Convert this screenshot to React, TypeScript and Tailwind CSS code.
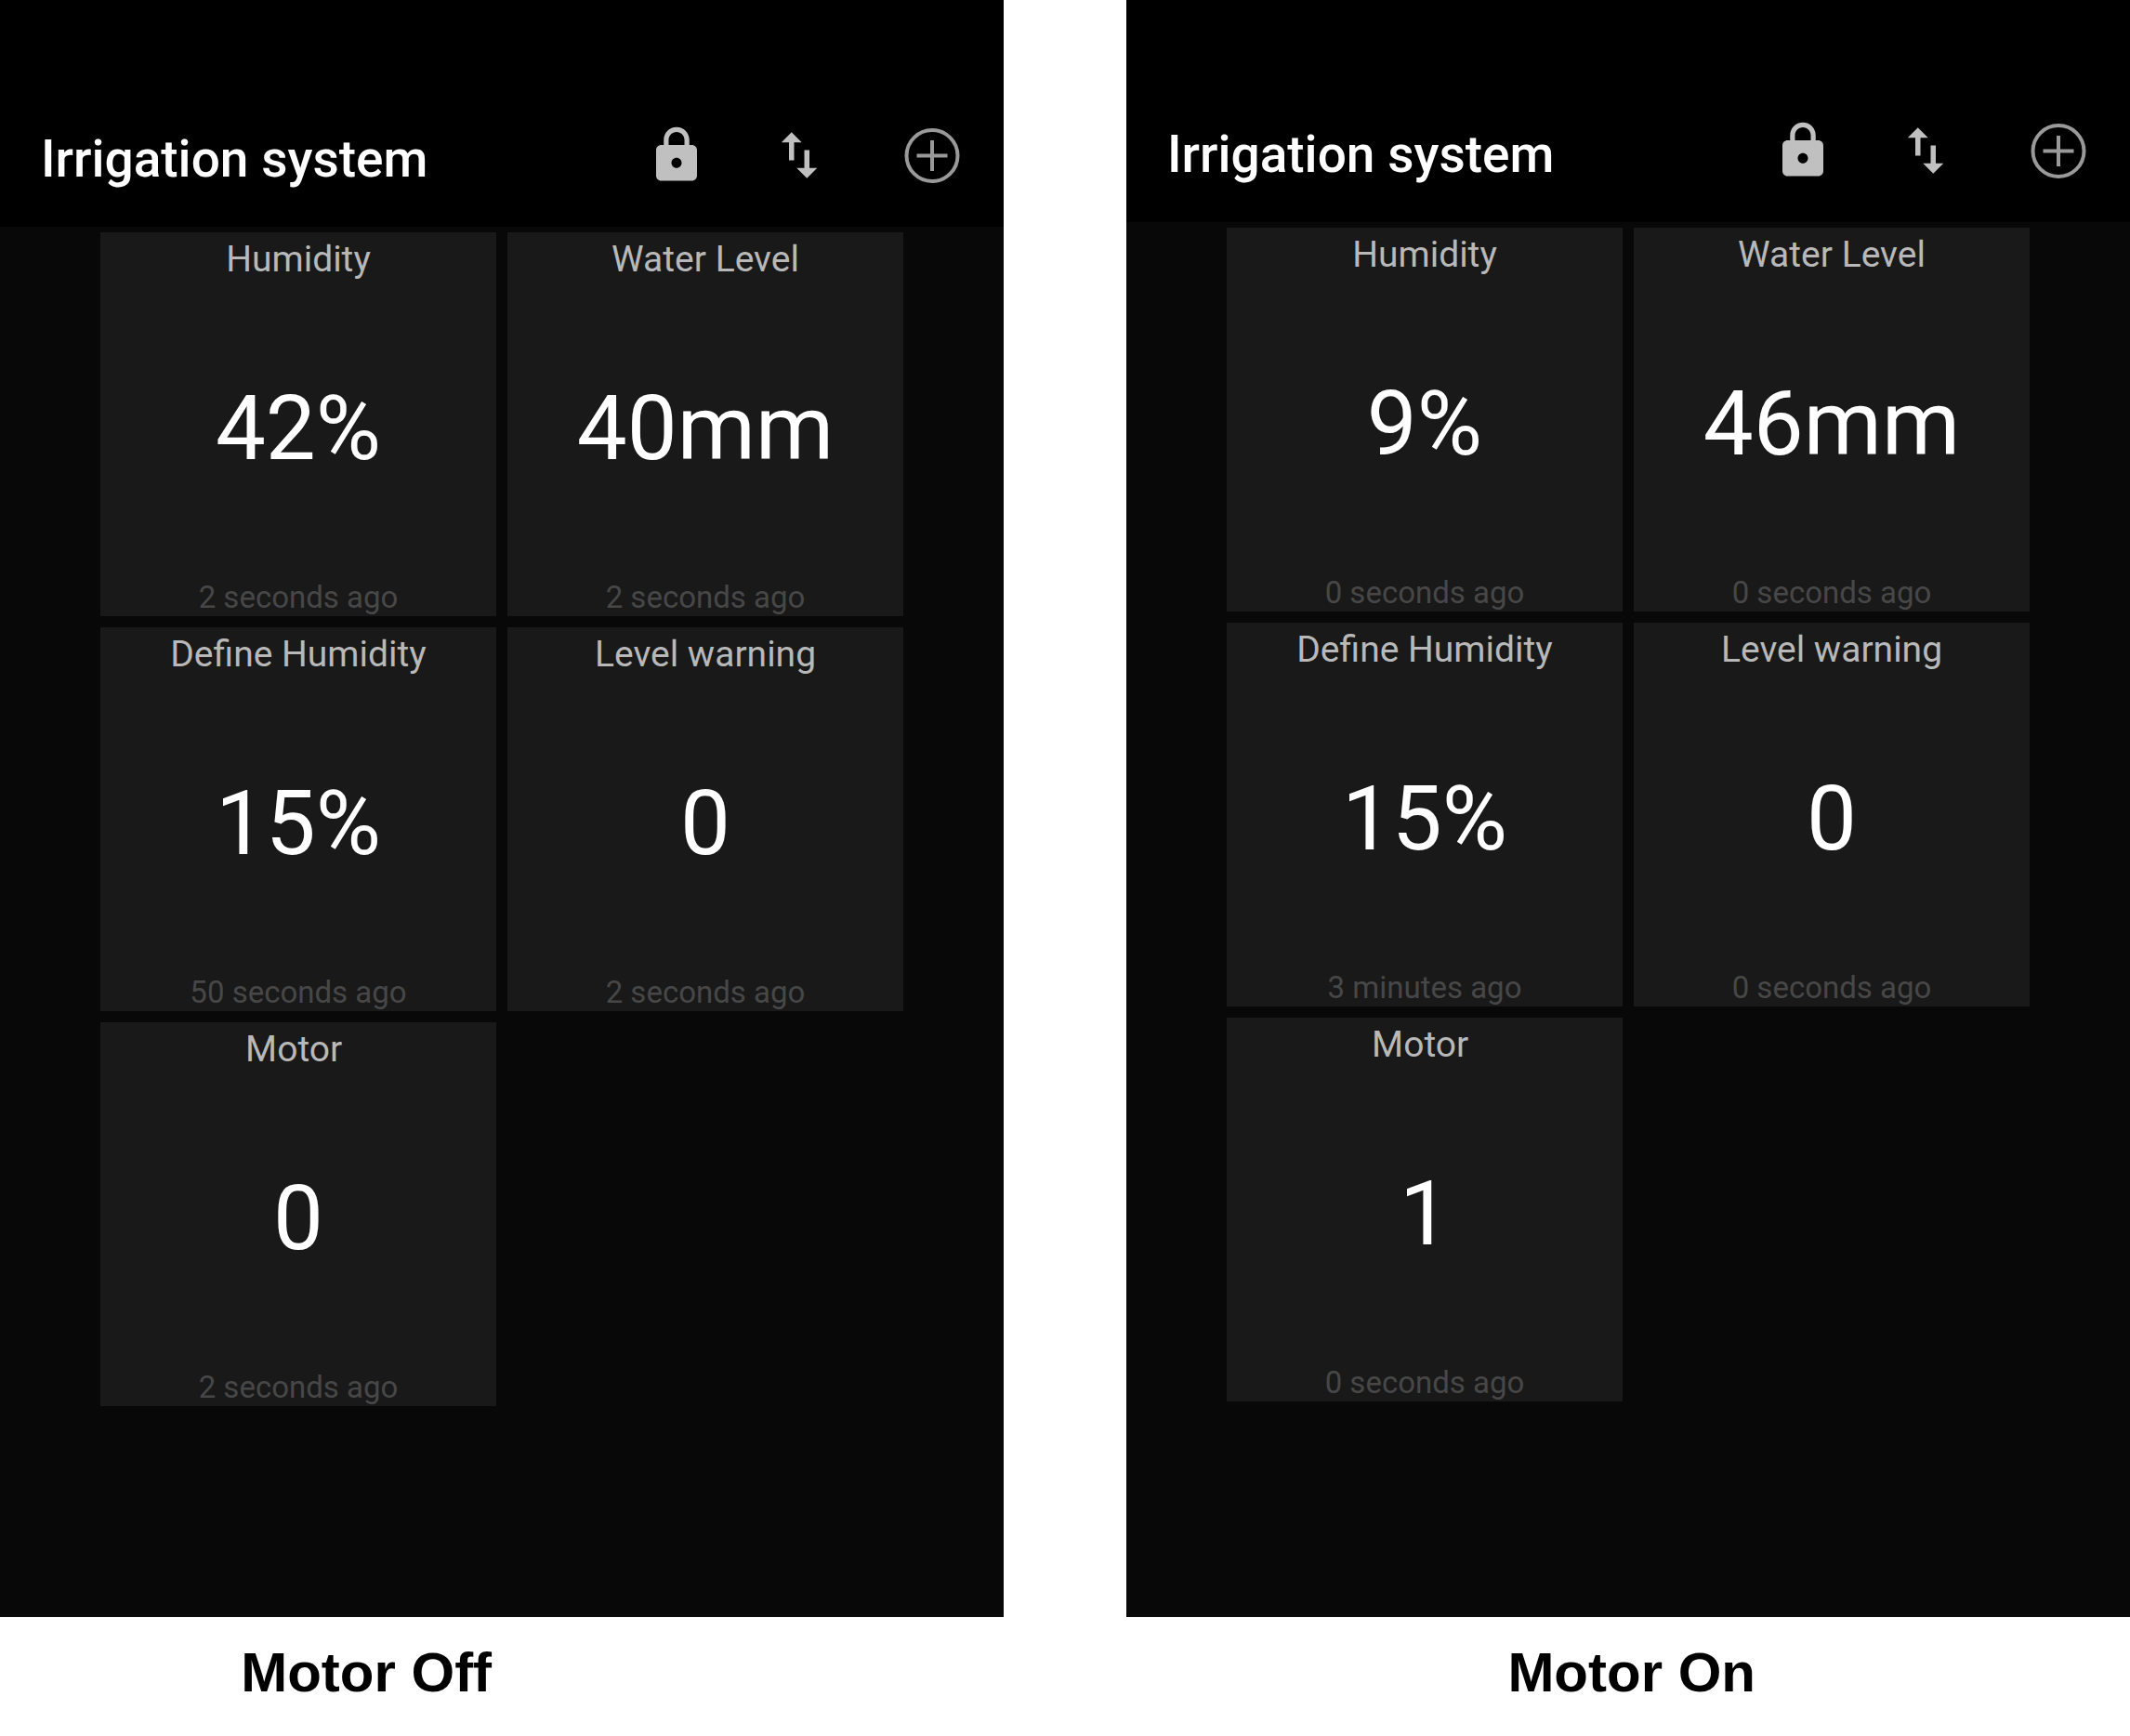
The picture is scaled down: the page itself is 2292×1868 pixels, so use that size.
type Tile = { label: string; value: string; updated: string };

const motorOff: Tile[] = [
  { label: "Humidity", value: "42%", updated: "2 seconds ago" },
  { label: "Water Level", value: "40mm", updated: "2 seconds ago" },
  { label: "Define Humidity", value: "15%", updated: "50 seconds ago" },
  { label: "Level warning", value: "0", updated: "2 seconds ago" },
  { label: "Motor ", value: "0", updated: "2 seconds ago" },
];

const motorOn: Tile[] = [
  { label: "Humidity", value: "9%", updated: "0 seconds ago" },
  { label: "Water Level", value: "46mm", updated: "0 seconds ago" },
  { label: "Define Humidity", value: "15%", updated: "3 minutes ago" },
  { label: "Level warning", value: "0", updated: "0 seconds ago" },
  { label: "Motor ", value: "1", updated: "0 seconds ago" },
];

function LockIcon() {
  return (
    <svg viewBox="0 0 24 24" className="size-full" fill="currentColor" aria-hidden="true">
      <path d="M18 8h-1V6c0-2.76-2.24-5-5-5S7 3.24 7 6v2H6c-1.1 0-2 .9-2 2v10c0 1.1.9 2 2 2h12c1.1 0 2-.9 2-2V10c0-1.1-.9-2-2-2zm-6 9c-1.1 0-2-.9-2-2s.9-2 2-2 2 .9 2 2-.9 2-2 2zm3.1-9H8.9V6c0-1.71 1.39-3.1 3.1-3.1 1.71 0 3.1 1.39 3.1 3.1v2z" />
    </svg>
  );
}

function SwapIcon() {
  return (
    <svg viewBox="0 0 24 24" className="size-full" fill="currentColor" aria-hidden="true">
      <path d="M16 17.01V10h-2v7.01h-3L15 21l4-3.99h-3zM9 3L5 6.99h3V14h2V6.99h3L9 3z" />
    </svg>
  );
}

function AddIcon() {
  return (
    <svg viewBox="0 0 66 66" className="size-full" fill="none" stroke="currentColor" strokeWidth="4" aria-hidden="true">
      <circle cx="33" cy="33.5" r="27.5" />
      <path d="M33 17v33M16.500 33.500h33" />
    </svg>
  );
}

function Panel({ tiles, topClass }: { tiles: Tile[]; topClass: string }) {
  return (
    <section className="flex-1 bg-[#080808] font-[Roboto,sans-serif]">
      <header className={`flex items-start justify-between bg-black px-11 pb-10 ${topClass}`}>
        <h1 className="pt-1 text-[55px] leading-[66px] font-medium whitespace-nowrap text-white">
          Irrigation system
        </h1>
        <div className="flex gap-[77px] text-[#c0c0c0]">
          <div className="flex gap-[66px]">
            <button type="button" aria-label="Lock" className="size-[66px]">
              <LockIcon />
            </button>
            <button type="button" aria-label="Reorder" className="size-[66px]">
              <SwapIcon />
            </button>
          </div>
          <button type="button" aria-label="Add tile" className="size-[66px] text-[#999999]">
            <AddIcon />
          </button>
        </div>
      </header>
      <div className="grid grid-cols-2 gap-3 px-[10%] pt-1.5">
        {tiles.map((tile) => (
          <article key={tile.label} className="flex h-[413px] flex-col bg-[#191919] text-center">
            <h2 className="pt-[5px] text-[39px] leading-12 whitespace-pre text-[#b8b8b8]">{tile.label}</h2>
            <p className="flex flex-1 items-center justify-center text-8xl text-white">{tile.value}</p>
            <p className="pt-1 text-[33px] leading-10 text-[#474747]">{tile.updated}</p>
          </article>
        ))}
      </div>
    </section>
  );
}

export default function App() {
  return (
    <main className="flex min-h-screen gap-[132px] bg-white">
      <figure className="flex flex-1 flex-col">
        <Panel tiles={motorOff} topClass="pt-[134px]" />
        <figcaption className="pt-6 pb-8 pl-[24%] font-['Liberation_Sans',sans-serif] text-[60px] leading-[72px] font-bold text-black">
          Motor Off
        </figcaption>
      </figure>
      <figure className="flex flex-1 flex-col">
        <Panel tiles={motorOn} topClass="pt-[129px]" />
        <figcaption className="pt-6 pb-8 pl-[38%] font-['Liberation_Sans',sans-serif] text-[60px] leading-[72px] font-bold text-black">
          Motor On
        </figcaption>
      </figure>
    </main>
  );
}
